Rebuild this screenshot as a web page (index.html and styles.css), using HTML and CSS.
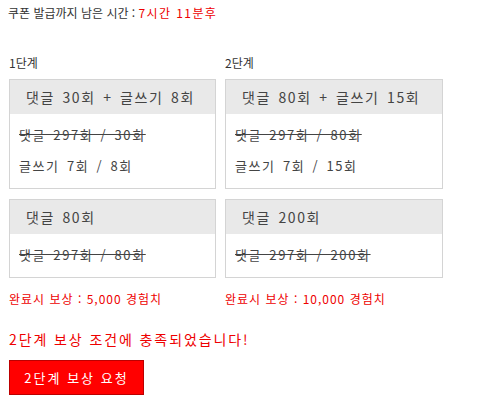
FILE: index.html
```html
<!DOCTYPE html>
<html lang="ko">
<head>
<meta charset="utf-8">
<link rel="stylesheet" href="styles.css">
</head>
<body>
<div class="page">
  <p class="timer">쿠폰 발급까지 남은 시간 : <span class="red">7시간 11분후</span></p>
  <div class="stages">
    <div class="col col1">
      <div class="label">1단계</div>
      <div class="box">
        <div class="head">댓글 30회 + 글쓰기 8회</div>
        <div class="body">
          <div class="line done">댓글 297회 / 30회</div>
          <div class="line">글쓰기 7회 / 8회</div>
        </div>
      </div>
      <div class="box box2">
        <div class="head">댓글 80회</div>
        <div class="body">
          <div class="line done">댓글 297회 / 80회</div>
        </div>
      </div>
      <div class="reward">완료시 보상 : 5,000 경험치</div>
    </div>
    <div class="col col2">
      <div class="label">2단계</div>
      <div class="box">
        <div class="head">댓글 80회 + 글쓰기 15회</div>
        <div class="body">
          <div class="line done">댓글 297회 / 80회</div>
          <div class="line">글쓰기 7회 / 15회</div>
        </div>
      </div>
      <div class="box box2">
        <div class="head">댓글 200회</div>
        <div class="body">
          <div class="line done">댓글 297회 / 200회</div>
        </div>
      </div>
      <div class="reward">완료시 보상 : 10,000 경험치</div>
    </div>
  </div>
  <p class="notice">2단계 보상 조건에 충족되었습니다!</p>
  <button class="btn" type="button">2단계 보상 요청</button>
</div>
</body>
</html>
```
FILE: styles.css
```css
html, body {
  margin: 0;
  padding: 0;
  background: #fff;
}
body {
  font-family: "Noto Sans CJK KR", "Noto Sans", sans-serif;
  color: #444;
}
.page {
  padding: 0 0 0 9px;
}
.timer {
  margin: 0;
  padding-top: 5px;
  height: 22px;
  line-height: 16px;
  font-size: 12px;
  margin-left: -1px;
  color: #333;
}
.red {
  color: #e00;
  letter-spacing: 1.4px;
}
.stages {
  display: grid;
  grid-template-columns: 207px 218px;
  column-gap: 9px;
  margin-top: 28px;
}
.label {
  font-size: 12px;
  line-height: 16px;
  height: 24px;
  color: #333;
}
.box {
  border: 1px solid #d4d4d4;
}
.box2 {
  margin-top: 10px;
}
.head {
  background: #e9e9e9;
  height: 34px;
  line-height: 34px;
  padding-left: 16px;
  font-size: 14px;
  letter-spacing: 1.6px;
  word-spacing: 2px;
}
.body {
  padding: 5px 0 7px 9px;
}
.line {
  font-size: 13px;
  line-height: 31px;
  letter-spacing: 1.6px;
  word-spacing: 2px;
}
.done {
  text-decoration: line-through;
}
.reward {
  color: #e00;
  font-size: 12px;
  line-height: 16px;
  margin-top: 13px;
  letter-spacing: 1px;
}
.notice {
  margin: 23px 0 0;
  color: #e00;
  font-size: 14px;
  line-height: 18px;
  letter-spacing: 1.9px;
}
.btn {
  margin-top: 12px;
  width: 135px;
  height: 35px;
  background: #f00;
  border: 1px solid #b00;
  color: #fff;
  font-family: inherit;
  font-size: 13px;
  letter-spacing: 2px;
  padding: 0;
  cursor: pointer;
}
```
